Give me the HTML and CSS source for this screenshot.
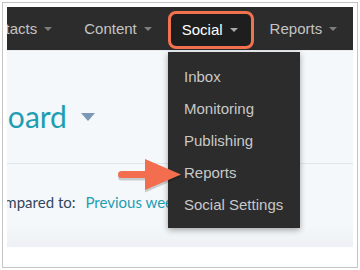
FILE: index.html
```html
<!DOCTYPE html>
<html lang="en">
<head>
    <meta charset="UTF-8">
    <title>Social Reports</title>
    <link rel="stylesheet" href="styles.css">
</head>
<body>
    <div class="frame">
        <div class="app">
            <nav class="nav">
                <div class="nav-item first">Contacts <span class="caret"></span></div>
                <div class="nav-item">Content <span class="caret"></span></div>
                <div class="nav-item active">Social <span class="caret"></span></div>
                <div class="nav-item">Reports <span class="caret"></span></div>
            </nav>

            <main class="content">
                <div class="page-header">
                    <h1 class="page-title">Dashboard</h1>
                    <span class="title-caret"></span>
                </div>
                <div class="compare-row">
                    <span class="compare-label">Compared to:</span>
                    <a class="compare-link">Previous week</a>
                </div>
            </main>

            <ul class="dropdown">
                <li>Inbox</li>
                <li>Monitoring</li>
                <li>Publishing</li>
                <li>Reports</li>
                <li>Social Settings</li>
            </ul>

            <svg class="pointer" width="72" height="38" viewBox="0 0 72 38">
                <g transform="translate(0 1.5)" fill="rgba(0,0,0,0.18)">
                    <rect x="4" y="14" width="34" height="7" rx="3.5"/>
                    <polygon points="31,2 67,17.5 31,33"/>
                </g>
                <g fill="#f26e4e">
                    <rect x="4" y="13" width="34" height="7" rx="3.5"/>
                    <polygon points="31,1 67,16.5 31,32"/>
                </g>
            </svg>
        </div>
    </div>
</body>
</html>
```

FILE: styles.css
```css
:root {
    --nav-bg: #2c2c2c;
    --nav-text: #c4c4c4;
    --accent: #f2714f;
    --teal: #1f9db3;
    --page-bg: #f5f8fa;
    --line: #dfe5ec;
    --text-dark: #33475b;
}

* {
    margin: 0;
    padding: 0;
    box-sizing: border-box;
}

body {
    background: #ffffff;
    font-family: 'Liberation Sans', Arial, sans-serif;
    width: 360px;
    height: 270px;
    overflow: hidden;
}

.frame {
    margin: 2px 0 0 2px;
    width: 356px;
    height: 266px;
    border: 1px solid #c4c4c4;
    padding: 4px 4px 19px 4px;
    background: #ffffff;
}

.app {
    position: relative;
    height: 240px;
    display: flex;
    flex-direction: column;
    overflow: hidden;
}

.nav {
    height: 43px;
    flex: none;
    background: var(--nav-bg);
    display: flex;
    align-items: center;
    white-space: nowrap;
}

.nav-item {
    display: flex;
    align-items: center;
    gap: 7px;
    padding: 0 16px;
    height: 38px;
    color: var(--nav-text);
    font-size: 15px;
    flex: none;
}

.nav-item.first {
    margin-left: -45px;
}

.nav-item.active {
    color: #ffffff;
    background: #1e1e1e;
    border: 3px solid var(--accent);
    border-radius: 8px;
    padding: 0 13px 0 11px;
    margin: 2px 0 0 0;
}

.caret {
    width: 0;
    height: 0;
    border-left: 4px solid transparent;
    border-right: 4px solid transparent;
    border-top: 4px solid #7d7d7d;
    margin-top: 1px;
}

.active .caret {
    border-top-color: #a8a8a8;
}

.content {
    flex: 1;
    background: linear-gradient(to bottom, var(--page-bg) 88%, #edf1f5 100%);
    border-top: 1px solid #e9edf1;
    font-family: Lato, 'Open Sans', sans-serif;
}

.page-header {
    height: 113px;
    display: flex;
    align-items: center;
    gap: 14px;
    padding-top: 18px;
    border-bottom: 1px solid var(--line);
    white-space: nowrap;
}

.page-title {
    font-size: 30px;
    font-weight: 400;
    color: var(--teal);
    margin-left: -83px;
}

.title-caret {
    width: 0;
    height: 0;
    border-left: 7px solid transparent;
    border-right: 7px solid transparent;
    border-top: 8px solid #7c98b6;
    margin-top: 2px;
}

.compare-row {
    display: flex;
    align-items: center;
    gap: 10px;
    height: 78px;
    padding-bottom: 2px;
    white-space: nowrap;
    font-size: 15px;
}

.compare-label {
    color: var(--text-dark);
    margin-left: -21px;
}

.compare-link {
    color: var(--teal);
}

.dropdown {
    position: absolute;
    left: 161px;
    top: 45px;
    width: 132px;
    list-style: none;
    background: var(--nav-bg);
    padding: 9px 0 7px;
    box-shadow: 0 2px 6px rgba(0, 0, 0, 0.35);
}

.dropdown li {
    height: 32px;
    line-height: 32px;
    padding-left: 16px;
    color: #c8c8c8;
    font-size: 15px;
}

.pointer {
    position: absolute;
    left: 107px;
    top: 151px;
}
```
